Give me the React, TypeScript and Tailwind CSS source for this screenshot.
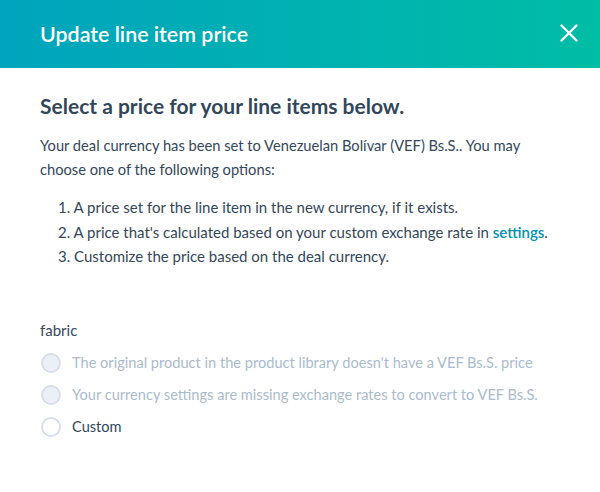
import React from "react";

function Radio({ disabled, label }: { disabled?: boolean; label: string }) {
  return (
    <label className="flex items-center h-[32px]">
      <span
        className={
          disabled
            ? "w-[20px] h-[20px] rounded-full border-2 border-[#d6dfe9] bg-[#eaf0f6] shrink-0 ml-[1px]"
            : "w-[20px] h-[20px] rounded-full border-2 border-[#d6dfe9] bg-white shrink-0 ml-[1px]"
        }
      />
      <span className={disabled ? "ml-[11px] text-[#aabbce]" : "ml-[11px] text-[#33475b]"}>{label}</span>
    </label>
  );
}

export default function App() {
  return (
    <div className="w-[600px] h-[492px] bg-white overflow-hidden" style={{ fontFamily: "Lato, 'Open Sans', sans-serif" }}>
      <div className="h-[68px] flex items-center justify-between pl-[40px] pr-[22px] bg-gradient-to-r from-[#00a4bd] to-[#00bda5]">
        <h1 className="text-white text-[21.4px] font-semibold">Update line item price</h1>
        <svg width="18" height="18" viewBox="0 0 18 18" className="mt-[-3px]">
          <path d="M1.5 1.5 L16.5 16.5 M16.5 1.5 L1.5 16.5" stroke="white" strokeWidth="2.4" strokeLinecap="round" />
        </svg>
      </div>
      <div className="px-[40px] pt-[24px] text-[#33475b] text-[15px] leading-[24px]">
        <h2 className="text-[21px] font-bold leading-[28px]">Select a price for your line items below.</h2>
        <p className="mt-[13px] text-[14.7px]">
          Your deal currency has been set to Venezuelan Bolívar (VEF) Bs.S.. You may choose one of the following options:
        </p>
        <ol className="mt-[14px] pl-[18px] leading-[24.5px]">
          <li>1. A price set for the line item in the new currency, if it exists.</li>
          <li>
            2. A price that's calculated based on your custom exchange rate in{" "}
            <span className="text-[#0091ae] font-semibold">settings</span>.
          </li>
          <li>3. Customize the price based on the deal currency.</li>
        </ol>
        <div className="mt-[49px]">fabric</div>
        <div className="mt-[5px] flex flex-col text-[14.6px]">
          <Radio disabled label="The original product in the product library doesn't have a VEF Bs.S. price" />
          <Radio disabled label="Your currency settings are missing exchange rates to convert to VEF Bs.S." />
          <Radio label="Custom" />
        </div>
      </div>
    </div>
  );
}
